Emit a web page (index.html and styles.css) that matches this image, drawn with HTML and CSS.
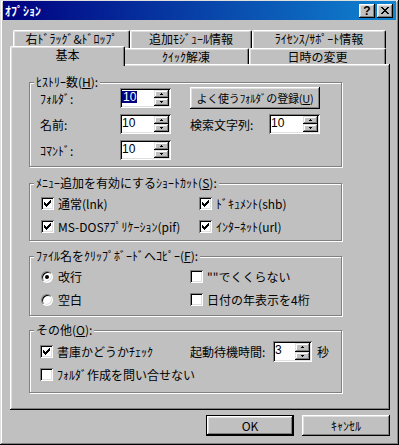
FILE: index.html
```html
<!DOCTYPE html>
<html>
	<head>
		<meta charset="utf-8" />
		<title>ｵﾌﾟｼｮﾝ</title>
		<link rel="stylesheet" href="styles.css">
	</head>
	<body>
		<div class="window">
			<div class="titlebar">
				<span class="title">ｵﾌﾟｼｮﾝ</span>
				<span class="tb-btns">
					<span class="tb-btn">?</span>
					<span class="tb-btn">
						<svg width="8" height="7" viewBox="0 0 8 7" shape-rendering="crispEdges"><path d="M0 0h2v1H0zM6 0h2v1H6zM1 1h2v1H1zM5 1h2v1H5zM2 2h4v1H2zM3 3h2v1H3zM2 4h4v1H2zM1 5h2v1H1zM5 5h2v1H5zM0 6h2v1H0zM6 6h2v1H6z" fill="#000"/></svg>
					</span>
				</span>
			</div>

			<div class="tabs">
				<div class="tab-row back">
					<div class="tab t1">右ﾄﾞﾗｯｸﾞ&amp;ﾄﾞﾛｯﾌﾟ</div>
					<div class="tab t2">追加ﾓｼﾞｭｰﾙ情報</div>
					<div class="tab t3">ﾗｲｾﾝｽ/ｻﾎﾟｰﾄ情報</div>
				</div>
				<div class="tab-row front">
					<div class="tab t4 active">基本</div>
					<div class="tab t5">ｸｲｯｸ解凍</div>
					<div class="tab t6">日時の変更</div>
				</div>
			</div>

			<div class="panel">
				<!-- ヒストリー数 -->
				<div class="group g1">
					<span class="legend">ﾋｽﾄﾘｰ数(<u>H</u>):</span>
					<div class="row">
						<span class="lbl">ﾌｫﾙﾀﾞ:</span>
						<div class="spin"><span class="spin-val"><span class="sel">10</span></span><span class="spin-btns"><i class="sbtn"><svg width="3" height="2" shape-rendering="crispEdges"><path d="M1 0h1v1H1zM0 1h3v1H0z"/></svg></i><i class="sbtn"><svg width="3" height="2" shape-rendering="crispEdges"><path d="M0 0h3v1H0zM1 1h1v1H1z"/></svg></i></span></div>
						<button class="btn wide">よく使うﾌｫﾙﾀﾞの登録(<u>U</u>)</button>
					</div>
					<div class="row">
						<span class="lbl">名前:</span>
						<div class="spin"><span class="spin-val">10</span><span class="spin-btns"><i class="sbtn"><svg width="3" height="2" shape-rendering="crispEdges"><path d="M1 0h1v1H1zM0 1h3v1H0z"/></svg></i><i class="sbtn"><svg width="3" height="2" shape-rendering="crispEdges"><path d="M0 0h3v1H0zM1 1h1v1H1z"/></svg></i></span></div>
						<span class="lbl lbl2">検索文字列:</span>
						<div class="spin"><span class="spin-val">10</span><span class="spin-btns"><i class="sbtn"><svg width="3" height="2" shape-rendering="crispEdges"><path d="M1 0h1v1H1zM0 1h3v1H0z"/></svg></i><i class="sbtn"><svg width="3" height="2" shape-rendering="crispEdges"><path d="M0 0h3v1H0zM1 1h1v1H1z"/></svg></i></span></div>
					</div>
					<div class="row">
						<span class="lbl">ｺﾏﾝﾄﾞ:</span>
						<div class="spin"><span class="spin-val">10</span><span class="spin-btns"><i class="sbtn"><svg width="3" height="2" shape-rendering="crispEdges"><path d="M1 0h1v1H1zM0 1h3v1H0z"/></svg></i><i class="sbtn"><svg width="3" height="2" shape-rendering="crispEdges"><path d="M0 0h3v1H0zM1 1h1v1H1z"/></svg></i></span></div>
					</div>
				</div>

				<!-- ショートカット -->
				<div class="group g2">
					<span class="legend">ﾒﾆｭｰ追加を有効にするｼｮｰﾄｶｯﾄ(<u>S</u>):</span>
					<div class="opt-row">
						<span class="cell c-wide"><span class="cb"><svg width="7" height="7" shape-rendering="crispEdges"><path d="M6 0h1v3H6zM5 1h1v3H5zM4 2h1v3H4zM3 3h1v3H3zM2 4h1v3H2zM1 3h1v3H1zM0 2h1v3H0z"/></svg></span><span class="txt">通常(lnk)</span></span>
						<span class="cell"><span class="cb"><svg width="7" height="7" shape-rendering="crispEdges"><path d="M6 0h1v3H6zM5 1h1v3H5zM4 2h1v3H4zM3 3h1v3H3zM2 4h1v3H2zM1 3h1v3H1zM0 2h1v3H0z"/></svg></span><span class="txt">ﾄﾞｷｭﾒﾝﾄ(shb)</span></span>
					</div>
					<div class="opt-row">
						<span class="cell c-wide"><span class="cb"><svg width="7" height="7" shape-rendering="crispEdges"><path d="M6 0h1v3H6zM5 1h1v3H5zM4 2h1v3H4zM3 3h1v3H3zM2 4h1v3H2zM1 3h1v3H1zM0 2h1v3H0z"/></svg></span><span class="txt">MS-DOSｱﾌﾟﾘｹｰｼｮﾝ(pif)</span></span>
						<span class="cell"><span class="cb"><svg width="7" height="7" shape-rendering="crispEdges"><path d="M6 0h1v3H6zM5 1h1v3H5zM4 2h1v3H4zM3 3h1v3H3zM2 4h1v3H2zM1 3h1v3H1zM0 2h1v3H0z"/></svg></span><span class="txt">ｲﾝﾀｰﾈｯﾄ(url)</span></span>
					</div>
				</div>

				<!-- クリップボード -->
				<div class="group g3">
					<span class="legend">ﾌｧｲﾙ名をｸﾘｯﾌﾟﾎﾞｰﾄﾞへｺﾋﾟｰ(<u>F</u>):</span>
					<div class="opt-row">
						<span class="cell"><span class="rb on"></span><span class="txt">改行</span></span>
						<span class="cell"><span class="cb"></span><span class="txt">""でくくらない</span></span>
					</div>
					<div class="opt-row">
						<span class="cell"><span class="rb"></span><span class="txt">空白</span></span>
						<span class="cell"><span class="cb"></span><span class="txt">日付の年表示を4桁</span></span>
					</div>
				</div>

				<!-- その他 -->
				<div class="group g4">
					<span class="legend">その他(<u>O</u>):</span>
					<div class="opt-row">
						<span class="cell"><span class="cb"><svg width="7" height="7" shape-rendering="crispEdges"><path d="M6 0h1v3H6zM5 1h1v3H5zM4 2h1v3H4zM3 3h1v3H3zM2 4h1v3H2zM1 3h1v3H1zM0 2h1v3H0z"/></svg></span><span class="txt">書庫かどうかﾁｪｯｸ</span></span>
						<span class="cell">
							<span class="lbl-wait">起動待機時間:</span>
							<div class="spin small"><span class="spin-val">3</span><span class="spin-btns"><i class="sbtn"><svg width="3" height="2" shape-rendering="crispEdges"><path d="M1 0h1v1H1zM0 1h3v1H0z"/></svg></i><i class="sbtn"><svg width="3" height="2" shape-rendering="crispEdges"><path d="M0 0h3v1H0zM1 1h1v1H1z"/></svg></i></span></div>
							<span class="unit">秒</span>
						</span>
					</div>
					<div class="opt-row">
						<span class="cell"><span class="cb"></span><span class="txt">ﾌｫﾙﾀﾞ作成を問い合せない</span></span>
					</div>
				</div>
			</div>

			<div class="buttons">
				<button class="btn dlg default">OK</button>
				<button class="btn dlg">ｷｬﾝｾﾙ</button>
			</div>
		</div>
	</body>
</html>
```

FILE: styles.css
```css
* {
	margin: 0;
	padding: 0;
}
body {
	background-color: #c0c0c0;
	font-family: "Noto Sans CJK JP", "Liberation Sans", sans-serif;
	font-size: 12px;
	color: #000;
}
u {
	text-decoration: underline;
}
.window {
	box-sizing: border-box;
	width: 399px;
	height: 445px;
	padding: 1px 3px 3px 3px;
	background-color: #c0c0c0;
	box-shadow: inset -1px -1px #000, inset 1px 1px #dfdfdf, inset -2px -2px #808080, inset 2px 2px #fff;
}
/* タイトルバー */
.titlebar {
	display: flex;
	align-items: center;
	justify-content: space-between;
	height: 19px;
	padding: 0 3px 0 2px;
	background: linear-gradient(to right, #000080, #1084d0);
}
.title {
	color: #fff;
	font-weight: bold;
	line-height: 19px;
}
.tb-btns {
	display: flex;
	gap: 2px;
}
.tb-btn {
	box-sizing: border-box;
	display: flex;
	align-items: center;
	justify-content: center;
	width: 16px;
	height: 14px;
	background-color: #c0c0c0;
	font: bold 12px "Liberation Sans", sans-serif;
	line-height: 12px;
	box-shadow: inset -1px -1px #000, inset 1px 1px #fff, inset -2px -2px #808080, inset 2px 2px #dfdfdf;
}
/* タブ */
.tabs {
	margin-top: 10px;
}
.tab-row {
	display: flex;
	align-items: flex-start;
}
.tab-row.back {
	height: 18px;
	margin-left: 10px;
}
.tab-row.front {
	height: 16px;
	margin-left: 9px;
}
.tab {
	box-sizing: border-box;
	height: 18px;
	text-align: center;
	line-height: 16px;
	white-space: nowrap;
	background-color: #c0c0c0;
	border-top: 1px solid #fff;
	border-left: 1px solid #fff;
	border-right: 1px solid #000;
	border-top-left-radius: 2px;
	border-top-right-radius: 2px;
	box-shadow: inset -1px 0 #808080, inset 1px 1px #dfdfdf;
}
.t1 { width: 117px; }
.t2 { width: 122px; }
.t3 { width: 134px; }
.t5 { width: 126px; }
.t6 { width: 137px; }
.tab.active {
	position: relative;
	z-index: 1;
	width: 115px;
	height: 20px;
	margin: -2px -2px 0 -2px;
	line-height: 15px;
}
.front .tab:not(.active) {
	height: 16px;
	line-height: 15px;
}
/* パネル */
.panel {
	box-sizing: border-box;
	width: 380px;
	height: 346px;
	margin-left: 7px;
	padding: 18px 0 0 19px;
	box-shadow: inset -1px -1px #000, inset 1px 1px #fff, inset -2px -2px #808080, inset 2px 2px #dfdfdf;
}
.group {
	position: relative;
	box-sizing: border-box;
	width: 313px;
	border: 1px solid #808080;
	box-shadow: 1px 1px 0 #fff, inset 1px 1px 0 #fff;
}
.legend {
	position: absolute;
	top: -8px;
	left: 4px;
	padding: 0 2px;
	line-height: 14px;
	white-space: nowrap;
	background-color: #c0c0c0;
}
.g1 {
	height: 85px;
	padding: 5px 0 0 10px;
}
.g2 {
	height: 58px;
	margin-top: 16px;
	padding: 13px 0 0 11px;
}
.g3 {
	height: 60px;
	margin-top: 15px;
	padding: 13px 0 0 11px;
}
.g4 {
	height: 63px;
	margin-top: 14px;
	padding: 14px 0 0 10px;
}
.row {
	display: flex;
	align-items: center;
	height: 20px;
	margin-bottom: 6px;
}
.lbl {
	width: 80px;
	white-space: nowrap;
}
.lbl2 {
	width: 79px;
	margin-left: 19px;
}
/* スピンボックス */
.spin {
	box-sizing: border-box;
	display: flex;
	width: 51px;
	height: 20px;
	padding: 2px;
	background-color: #fff;
	box-shadow: inset 1px 1px #808080, inset -1px -1px #fff, inset 2px 2px #000, inset -2px -2px #dfdfdf;
}
.spin.small {
	width: 39px;
	height: 21px;
}
.spin-val {
	flex: 1;
	padding-top: 1px;
	line-height: 12px;
	font-family: "Liberation Sans", sans-serif;
}
.sel {
	display: inline-block;
	padding: 0 1px;
	background-color: #000080;
	color: #fff;
}
.spin-btns {
	display: flex;
	flex-direction: column;
	width: 15px;
}
.sbtn {
	box-sizing: border-box;
	display: flex;
	align-items: center;
	justify-content: center;
	flex: 1;
	background-color: #c0c0c0;
	box-shadow: inset -1px -1px #000, inset 1px 1px #dfdfdf, inset -2px -2px #808080, inset 2px 2px #fff;
}
/* ボタン */
.btn {
	box-sizing: border-box;
	font-family: "Noto Sans CJK JP", "Liberation Sans", sans-serif;
	font-size: 12px;
	color: #000;
	white-space: nowrap;
	background-color: #c0c0c0;
	border: none;
	box-shadow: inset -1px -1px #000, inset 1px 1px #fff, inset -2px -2px #808080, inset 2px 2px #dfdfdf;
}
.btn.wide {
	width: 130px;
	height: 22px;
	margin: -1px 0 -1px 19px;
	padding: 0;
	font-size: 11px;
	letter-spacing: -0.2px;
}
.buttons {
	display: flex;
	justify-content: flex-end;
	gap: 8px;
	margin-top: 5px;
	padding-right: 6px;
}
.btn.dlg {
	width: 88px;
	height: 21px;
}
.btn.default {
	border: 1px solid #000;
}
/* チェック・ラジオ */
.opt-row {
	display: flex;
	align-items: center;
	height: 13px;
}
.opt-row + .opt-row {
	margin-top: 10px;
}
.cell {
	display: flex;
	align-items: center;
	width: 149px;
	white-space: nowrap;
}
.cell.c-wide {
	width: 166px;
}
.g4 .cell:first-child {
	width: 150px;
}
.cb {
	box-sizing: border-box;
	display: flex;
	align-items: center;
	justify-content: center;
	flex: none;
	width: 13px;
	height: 13px;
	background-color: #fff;
	box-shadow: inset 1px 1px #808080, inset -1px -1px #fff, inset 2px 2px #000, inset -2px -2px #dfdfdf;
}
.rb {
	position: relative;
	box-sizing: border-box;
	flex: none;
	width: 12px;
	height: 12px;
	border-radius: 50%;
	background-color: #fff;
	border: 1px solid;
	border-color: #808080 #fff #fff #808080;
	box-shadow: inset 1px 1px #000, inset -1px -1px #dfdfdf;
}
.rb.on::after {
	content: "";
	position: absolute;
	top: 3px;
	left: 3px;
	width: 4px;
	height: 4px;
	border-radius: 50%;
	background-color: #000;
}
.txt {
	margin-left: 4px;
	line-height: 13px;
}
.rb + .txt {
	margin-left: 5px;
}
.lbl-wait {
	width: 83px;
}
.unit {
	margin-left: 5px;
}
```
